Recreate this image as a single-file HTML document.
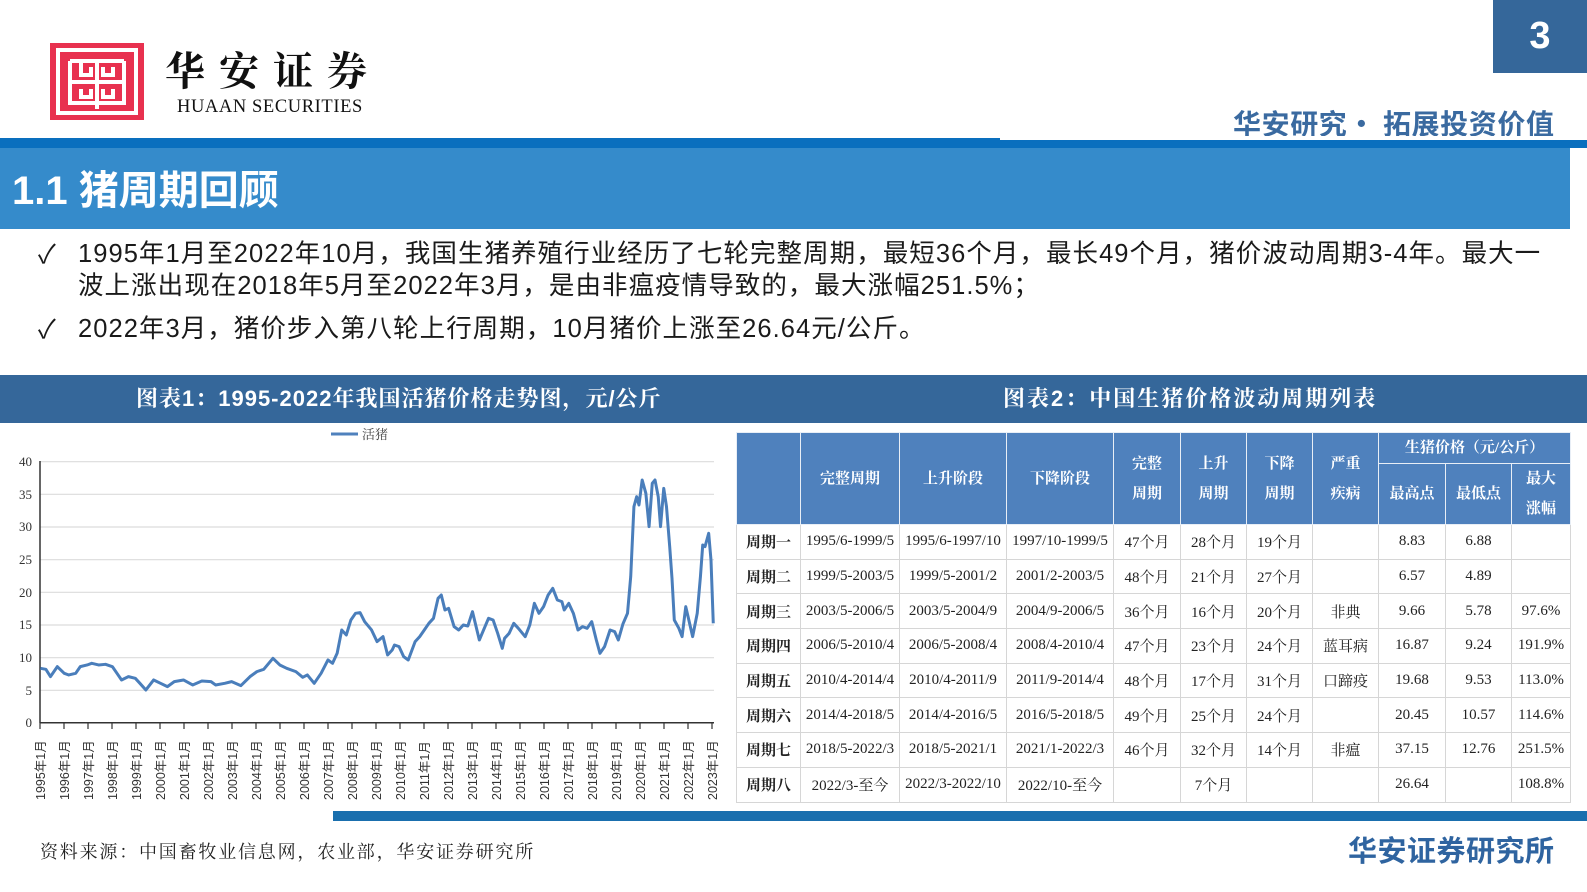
<!DOCTYPE html>
<html><head><meta charset="utf-8"><style>
*{margin:0;padding:0;box-sizing:border-box}
body{width:1587px;height:892px;position:relative;background:#fff;overflow:hidden;font-family:"Liberation Sans","Noto Sans CJK SC",sans-serif}
.a{position:absolute;white-space:nowrap}
table{position:absolute;left:736px;top:432px;border-collapse:collapse;font-family:"Liberation Serif","Noto Serif CJK SC",serif;font-size:15px;color:#222}
td{border:1.5px solid #d6d6d6;text-align:center;height:34.7px;padding:0}
th{background:#4f81bd;color:#fff;border:1.5px solid #e8eef6;font-weight:bold;font-size:15px;line-height:30px}
td.h{font-weight:bold;font-family:"Noto Serif CJK SC",serif}
</style></head><body>
<div class="a" style="left:50px;top:43px;width:94px;height:77px;background:#e8314f"></div>
<svg class="a" style="left:50px;top:43px" width="94" height="77" viewBox="0 0 94 77"><g fill="none" stroke="#fff" stroke-width="4"><rect x="8" y="7" width="78" height="63"/><path d="M20 18h54M20 18v42h54V18M47 18v48M20 39h54M31 18v14h10V24M53 24v8h10V24M31 46v8h10v-8M53 46v8h10v-8"/></g></svg>
<div class="a" style="left:165px;top:44px;font-family:'Noto Serif CJK SC',serif;font-size:40px;line-height:50px;font-weight:bold;letter-spacing:14px;color:#111">华安证券</div>
<div class="a" style="left:177px;top:97px;font-family:'Liberation Serif',serif;font-size:18.5px;letter-spacing:0.6px;color:#111">HUAAN SECURITIES</div>
<div class="a" style="left:1493px;top:0;width:94px;height:73px;background:#35679a;color:#fff;font-size:38px;font-weight:bold;text-align:center;line-height:73px">3</div>
<div class="a" style="left:1233px;top:103px;font-size:28px;font-weight:bold;color:#3a6aa0;letter-spacing:0.6px;font-family:'Noto Sans CJK SC',sans-serif">华安研究• 拓展投资价值</div>
<div class="a" style="left:0;top:138px;width:1587px;height:10px;background:#0a6fbe"></div>
<div class="a" style="left:1000px;top:136px;width:587px;height:4px;background:#fff"></div>
<div class="a" style="left:0;top:148px;width:1570px;height:81px;background:#358bcb"></div>
<div class="a" style="left:12px;top:158px;font-size:40px;font-weight:bold;color:#fff;font-family:'Liberation Sans','Noto Sans CJK SC',sans-serif">1.1 猪周期回顾</div>
<div class="a" style="left:38px;top:238px;font-size:26px;color:#1a1a1a;line-height:32px">✓</div>
<div class="a" style="left:78px;top:238px;font-size:25.5px;letter-spacing:1.05px;color:#1a1a1a;line-height:32px">1995年1月至2022年10月，我国生猪养殖行业经历了七轮完整周期，最短36个月，最长49个月，猪价波动周期3-4年。最大一<br>波上涨出现在2018年5月至2022年3月，是由非瘟疫情导致的，最大涨幅251.5%；</div>
<div class="a" style="left:38px;top:313px;font-size:26px;color:#1a1a1a;line-height:32px">✓</div>
<div class="a" style="left:78px;top:313px;font-size:25.5px;letter-spacing:1.05px;color:#1a1a1a;line-height:32px">2022年3月，猪价步入第八轮上行周期，10月猪价上涨至26.64元/公斤。</div>
<div class="a" style="left:0;top:375px;width:1587px;height:48px;background:#35679a"></div>
<div class="a" style="left:136px;top:382px;font-size:22px;letter-spacing:1px;font-weight:bold;color:#fff;font-family:'Liberation Sans','Noto Serif CJK SC',serif">图表1：1995-2022年我国活猪价格走势图，元/公斤</div>
<div class="a" style="left:1003px;top:382px;font-size:22px;letter-spacing:2px;font-weight:bold;color:#fff;font-family:'Liberation Sans','Noto Serif CJK SC',serif">图表2：中国生猪价格波动周期列表</div>
<svg class="a" style="left:0;top:420px" width="730" height="390" viewBox="0 420 730 390" font-family="Liberation Serif,Noto Serif CJK SC,serif">
<line x1="331" y1="434" x2="358" y2="434" stroke="#4f81bd" stroke-width="3"/>
<text x="362" y="439" font-size="13" fill="#444">活猪</text>
<g stroke="#dcdcdc" stroke-width="1.2">
<line x1="40" y1="461.7" x2="714" y2="461.7"/><line x1="40" y1="494.3" x2="714" y2="494.3"/><line x1="40" y1="527" x2="714" y2="527"/><line x1="40" y1="559.7" x2="714" y2="559.7"/><line x1="40" y1="592.3" x2="714" y2="592.3"/><line x1="40" y1="625" x2="714" y2="625"/><line x1="40" y1="657.7" x2="714" y2="657.7"/><line x1="40" y1="690.3" x2="714" y2="690.3"/></g>
<g font-size="13" fill="#333" text-anchor="end">
<text x="32" y="466">40</text><text x="32" y="499">35</text><text x="32" y="531">30</text><text x="32" y="564">25</text><text x="32" y="597">20</text><text x="32" y="629">15</text><text x="32" y="662">10</text><text x="32" y="695">5</text><text x="32" y="727">0</text></g>
<line x1="40" y1="461" x2="40" y2="723" stroke="#333" stroke-width="1.5"/>
<line x1="40" y1="722.7" x2="714" y2="722.7" stroke="#333" stroke-width="1.5"/>
<g transform="translate(0,420) scale(0.4587,0.3333)">
<polyline fill="none" stroke="#4a7ebb" stroke-width="3" vector-effect="non-scaling-stroke" stroke-linejoin="round" points="88,745 100,748 110,770 125,740 140,760 150,765 165,760 175,740 190,735 200,730 215,735 230,733 245,740 255,760 265,780 280,770 295,775 305,790 318,810 335,780 350,790 365,800 380,785 400,780 420,795 440,783 460,785 470,795 490,790 505,785 525,797 545,770 560,755 575,748 595,715 610,735 625,745 645,755 660,772 670,765 685,790 700,760 715,720 725,730 735,700 745,630 755,645 765,600 775,580 785,578 795,605 810,630 822,665 835,650 845,705 855,690 860,675 870,680 880,710 890,720 905,665 915,650 925,630 935,610 945,595 955,535 962,525 970,570 978,565 990,620 1000,630 1010,615 1020,618 1030,575 1045,660 1065,595 1075,600 1085,640 1095,685 1100,655 1110,640 1120,610 1130,625 1145,650 1155,615 1165,550 1175,580 1185,560 1195,525 1205,505 1215,540 1225,545 1230,570 1240,550 1250,580 1260,630 1270,620 1280,625 1290,605 1300,660 1308,700 1318,680 1330,630 1340,635 1348,660 1358,612 1368,580 1375,470 1382,260 1388,230 1393,255 1400,180 1408,220 1415,320 1422,190 1428,180 1435,230 1440,320 1447,205 1453,260 1460,380 1465,475 1470,600 1480,625 1487,650 1495,560 1500,590 1510,650 1520,580 1527,470 1532,375 1537,380 1545,340 1550,420 1555,610"/>
</g>
<g font-size="12.5" fill="#333" font-family="Liberation Sans,Noto Sans CJK SC,sans-serif">
<text transform="translate(45,800) rotate(-90)">1995年1月</text><text transform="translate(69,800) rotate(-90)">1996年1月</text><text transform="translate(93,800) rotate(-90)">1997年1月</text><text transform="translate(117,800) rotate(-90)">1998年1月</text><text transform="translate(141,800) rotate(-90)">1999年1月</text><text transform="translate(165,800) rotate(-90)">2000年1月</text><text transform="translate(189,800) rotate(-90)">2001年1月</text><text transform="translate(213,800) rotate(-90)">2002年1月</text><text transform="translate(237,800) rotate(-90)">2003年1月</text><text transform="translate(261,800) rotate(-90)">2004年1月</text><text transform="translate(285,800) rotate(-90)">2005年1月</text><text transform="translate(309,800) rotate(-90)">2006年1月</text><text transform="translate(333,800) rotate(-90)">2007年1月</text><text transform="translate(357,800) rotate(-90)">2008年1月</text><text transform="translate(381,800) rotate(-90)">2009年1月</text><text transform="translate(405,800) rotate(-90)">2010年1月</text><text transform="translate(429,800) rotate(-90)">2011年1月</text><text transform="translate(453,800) rotate(-90)">2012年1月</text><text transform="translate(477,800) rotate(-90)">2013年1月</text><text transform="translate(501,800) rotate(-90)">2014年1月</text><text transform="translate(525,800) rotate(-90)">2015年1月</text><text transform="translate(549,800) rotate(-90)">2016年1月</text><text transform="translate(573,800) rotate(-90)">2017年1月</text><text transform="translate(597,800) rotate(-90)">2018年1月</text><text transform="translate(621,800) rotate(-90)">2019年1月</text><text transform="translate(645,800) rotate(-90)">2020年1月</text><text transform="translate(669,800) rotate(-90)">2021年1月</text><text transform="translate(693,800) rotate(-90)">2022年1月</text><text transform="translate(717,800) rotate(-90)">2023年1月</text>
</g>
<path stroke="#333" stroke-width="1.2" d="M40 723v6M64 723v6M88 723v6M112 723v6M136 723v6M160 723v6M184 723v6M208 723v6M232 723v6M256 723v6M280 723v6M304 723v6M328 723v6M352 723v6M376 723v6M400 723v6M424 723v6M448 723v6M472 723v6M496 723v6M520 723v6M544 723v6M568 723v6M592 723v6M616 723v6M640 723v6M664 723v6M688 723v6M712 723v6"/>
</svg>
<table>
<colgroup><col style="width:64px"><col style="width:99px"><col style="width:107px"><col style="width:107px"><col style="width:67px"><col style="width:66px"><col style="width:66px"><col style="width:66px"><col style="width:67px"><col style="width:66px"><col style="width:59px"></colgroup>
<tr><th rowspan="2" style="height:91px"></th><th rowspan="2">完整周期</th><th rowspan="2">上升阶段</th><th rowspan="2">下降阶段</th><th rowspan="2">完整<br>周期</th><th rowspan="2">上升<br>周期</th><th rowspan="2">下降<br>周期</th><th rowspan="2">严重<br>疾病</th><th colspan="3" style="height:30px">生猪价格（元/公斤）</th></tr>
<tr><th>最高点</th><th>最低点</th><th>最大<br>涨幅</th></tr>
<tr><td class="h">周期一</td><td>1995/6-1999/5</td><td>1995/6-1997/10</td><td>1997/10-1999/5</td><td>47个月</td><td>28个月</td><td>19个月</td><td></td><td>8.83</td><td>6.88</td><td></td></tr>
<tr><td class="h">周期二</td><td>1999/5-2003/5</td><td>1999/5-2001/2</td><td>2001/2-2003/5</td><td>48个月</td><td>21个月</td><td>27个月</td><td></td><td>6.57</td><td>4.89</td><td></td></tr>
<tr><td class="h">周期三</td><td>2003/5-2006/5</td><td>2003/5-2004/9</td><td>2004/9-2006/5</td><td>36个月</td><td>16个月</td><td>20个月</td><td>非典</td><td>9.66</td><td>5.78</td><td>97.6%</td></tr>
<tr><td class="h">周期四</td><td>2006/5-2010/4</td><td>2006/5-2008/4</td><td>2008/4-2010/4</td><td>47个月</td><td>23个月</td><td>24个月</td><td>蓝耳病</td><td>16.87</td><td>9.24</td><td>191.9%</td></tr>
<tr><td class="h">周期五</td><td>2010/4-2014/4</td><td>2010/4-2011/9</td><td>2011/9-2014/4</td><td>48个月</td><td>17个月</td><td>31个月</td><td>口蹄疫</td><td>19.68</td><td>9.53</td><td>113.0%</td></tr>
<tr><td class="h">周期六</td><td>2014/4-2018/5</td><td>2014/4-2016/5</td><td>2016/5-2018/5</td><td>49个月</td><td>25个月</td><td>24个月</td><td></td><td>20.45</td><td>10.57</td><td>114.6%</td></tr>
<tr><td class="h">周期七</td><td>2018/5-2022/3</td><td>2018/5-2021/1</td><td>2021/1-2022/3</td><td>46个月</td><td>32个月</td><td>14个月</td><td>非瘟</td><td>37.15</td><td>12.76</td><td>251.5%</td></tr>
<tr><td class="h">周期八</td><td>2022/3-至今</td><td>2022/3-2022/10</td><td>2022/10-至今</td><td></td><td>7个月</td><td></td><td></td><td>26.64</td><td></td><td>108.8%</td></tr>
</table>
<div class="a" style="left:333px;top:811px;width:1254px;height:10px;background:#1a6fae"></div>
<div class="a" style="left:40px;top:838px;font-size:18px;letter-spacing:1.8px;color:#222;font-family:'Noto Serif CJK SC',serif">资料来源：中国畜牧业信息网，农业部，华安证券研究所</div>
<div class="a" style="left:1348px;top:828px;font-size:29px;letter-spacing:0.5px;font-weight:bold;color:#2f64a0;font-family:'Noto Sans CJK SC',sans-serif">华安证券研究所</div>
</body></html>
